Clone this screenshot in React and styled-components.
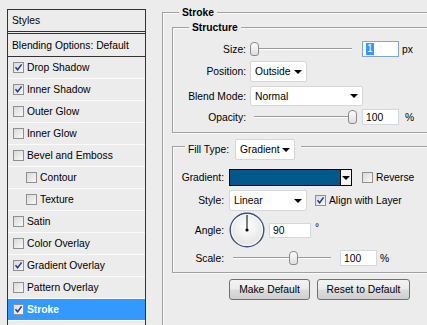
import React from "react";
import styled, { createGlobalStyle } from "styled-components";

const GlobalStyle = createGlobalStyle`
  html, body { margin: 0; padding: 0; background: #ececec; overflow: hidden; }
  body {
    font-family: "Liberation Sans", Arial, sans-serif;
    font-size: 10.3px;
    color: #000;
  }
`;

const Page = styled.div`
  display: flex;
  align-items: flex-start;
  height: 325px;
  overflow: hidden;
`;

/* ---------- left styles list ---------- */

const StylesPanel = styled.div`
  flex: none;
  box-sizing: border-box;
  width: 139px;
  height: 330px;
  margin: 9px 0 0 7px;
  border: 1px solid #333;
  border-bottom: none;
`;

const PanelHeader = styled.div`
  height: 21px;
  display: flex;
  align-items: center;
  padding-left: 4px;
  border-bottom: 3px double #333;
`;

const BlendingRow = styled.div`
  height: 22px;
  display: flex;
  align-items: center;
  padding-left: 4px;
  border-bottom: 1px solid #333;
`;

const StyleRow = styled.div`
  height: 21px;
  display: flex;
  align-items: center;
  gap: 3px;
  padding-left: ${(p) => (p.$indent ? 18 : 5)}px;
  border-bottom: 1px solid #fbfbfb;
  background: ${(p) => (p.$selected ? "#3399ff" : "transparent")};
  color: ${(p) => (p.$selected ? "#fff" : "#000")};
  font-weight: ${(p) => (p.$selected ? "bold" : "normal")};
`;

const Box = styled.span`
  flex: none;
  box-sizing: border-box;
  width: 11px;
  height: 11px;
  border: 1px solid #8e8f8f;
  background: linear-gradient(135deg, #d9d9d9, #f9f9f9);
  display: inline-flex;
  align-items: center;
  justify-content: center;
`;

const Checkbox = ({ checked }) => (
  <Box>
    {checked && (
      <svg width="9" height="9" viewBox="0 0 9 9">
        <path d="M1.5 4.3 L3.6 6.8 L7.6 1.4" fill="none" stroke="#21379a" strokeWidth="1.5" />
      </svg>
    )}
  </Box>
);

/* ---------- right settings ---------- */

const RightArea = styled.div`
  flex: none;
  margin: 12px 0 0 16px;
`;

const GroupBox = styled.div`
  position: relative;
  box-sizing: border-box;
  width: ${(p) => p.$w}px;
  height: ${(p) => p.$h}px;
  margin-top: ${(p) => p.$mt || 0}px;
  padding: ${(p) => p.$pt}px 0 0 ${(p) => p.$pl || 0}px;
  border: 1px solid #a0a0a0;
  box-shadow: inset 1px 1px 0 #fafafa, 1px 1px 0 #fafafa;
`;

const GroupTitle = styled.div`
  position: absolute;
  top: ${(p) => p.$top || -7}px;
  left: ${(p) => p.$left}px;
  padding: 0 3px;
  line-height: 13px;
  background: #ececec;
  font-weight: bold;
`;

const FillLegend = styled.div`
  position: absolute;
  top: -8px;
  left: 12px;
  display: flex;
  align-items: center;
  gap: 6px;
  padding: 0 6px 0 3px;
  background: #ececec;
`;

const FormRow = styled.div`
  display: flex;
  align-items: center;
  height: ${(p) => p.$h}px;
  margin-top: ${(p) => p.$mt || 0}px;
`;

const Label = styled.span`
  flex: none;
  width: ${(p) => p.$w}px;
  margin-right: ${(p) => p.$gap}px;
  text-align: right;
`;

const Slider = styled.div`
  position: relative;
  flex: none;
  width: ${(p) => p.$w}px;
  height: 16px;
  &::before {
    content: "";
    position: absolute;
    left: 4px;
    right: 4px;
    top: 7px;
    height: 1px;
    background: #9a9a9a;
    box-shadow: 0 1px 0 #fff;
  }
`;

const Thumb = styled.div`
  position: absolute;
  top: 1px;
  box-sizing: border-box;
  width: 9px;
  height: 14px;
  border: 1px solid #8a8a8a;
  border-radius: 4px 4px 3px 3px;
  background: linear-gradient(#fdfdfd, #dedede);
`;

const TrackSlider = ({ w, value }) => (
  <Slider $w={w}>
    <Thumb style={{ left: 4 + (w - 8) * value - 4.5 }} />
  </Slider>
);

const TextInput = styled.div`
  flex: none;
  box-sizing: border-box;
  width: ${(p) => p.$w}px;
  height: ${(p) => p.$h || 16}px;
  margin-left: ${(p) => p.$ml || 0}px;
  padding-left: 3px;
  display: flex;
  align-items: center;
  background: #fff;
  border: 1px solid ${(p) => (p.$focus ? "#7ea6cf" : "#d2d8df")};
`;

const Selected = styled.span`
  background: #3399ff;
  color: #fff;
  padding: 0 1px;
  line-height: 12px;
`;

const Unit = styled.span`
  margin-left: ${(p) => p.$ml}px;
  align-self: ${(p) => (p.$sup ? "flex-start" : "center")};
  margin-top: ${(p) => (p.$sup ? 10 : 0)}px;
`;

const Select = styled.div`
  flex: none;
  box-sizing: border-box;
  width: ${(p) => p.$w}px;
  height: ${(p) => p.$h}px;
  display: flex;
  align-items: center;
  justify-content: space-between;
  padding: 0 4px;
  background: #fff;
  border: 1px solid #d6d6d6;
  border-radius: 2px;
`;

const Arrow = styled.span`
  width: 0;
  height: 0;
  border-left: 4px solid transparent;
  border-right: 4px solid transparent;
  border-top: 4px solid #000;
`;

const GradientPicker = styled.div`
  flex: none;
  box-sizing: border-box;
  width: 123px;
  height: 17px;
  display: flex;
  border: 1px solid #000;
`;

const GradientFill = styled.div`
  flex: 1;
  background: #02588c;
  border-right: 1px solid #000;
`;

const GradientDrop = styled.div`
  width: 10px;
  display: flex;
  align-items: center;
  justify-content: center;
  background: #f2f2f2;
`;

const CheckLabel = styled.label`
  display: flex;
  align-items: center;
  gap: 3px;
  margin-left: ${(p) => p.$ml}px;
`;

const ButtonRow = styled.div`
  display: flex;
  gap: 7px;
  margin: 6px 0 0 57px;
`;

const Button = styled.button`
  box-sizing: border-box;
  width: ${(p) => p.$w}px;
  height: 21px;
  padding: 0;
  border: 1px solid #707070;
  border-radius: 3px;
  background: linear-gradient(#f3f3f3 0%, #ebebeb 48%, #dddddd 52%, #cfcfcf 100%);
  font-family: inherit;
  font-size: 10.3px;
  color: #000;
`;

const AngleDial = () => (
  <svg width="36" height="36" viewBox="0 0 36 36" style={{ flex: "none" }}>
    <defs>
      <radialGradient id="dialFill" cx="50%" cy="40%" r="60%">
        <stop offset="0%" stopColor="#ffffff" />
        <stop offset="100%" stopColor="#e2e2e2" />
      </radialGradient>
    </defs>
    <circle cx="18" cy="18" r="16.8" fill="url(#dialFill)" stroke="#3e4f86" strokeWidth="1.4" />
    <circle cx="18" cy="18" r="15.5" fill="none" stroke="#ffffff" strokeWidth="0.8" />
    <line x1="18" y1="18" x2="18" y2="3" stroke="#000" strokeWidth="1" />
    <circle cx="18" cy="18" r="1.6" fill="#000" />
  </svg>
);

const styleItems = [
  { name: "Drop Shadow", checked: true },
  { name: "Inner Shadow", checked: true },
  { name: "Outer Glow" },
  { name: "Inner Glow" },
  { name: "Bevel and Emboss" },
  { name: "Contour", indent: true },
  { name: "Texture", indent: true },
  { name: "Satin" },
  { name: "Color Overlay" },
  { name: "Gradient Overlay", checked: true },
  { name: "Pattern Overlay" },
  { name: "Stroke", checked: true, selected: true },
];

export default function App() {
  return (
    <Page>
      <GlobalStyle />
      <StylesPanel>
        <PanelHeader>Styles</PanelHeader>
        <BlendingRow>Blending Options: Default</BlendingRow>
        {styleItems.map((item) => (
          <StyleRow key={item.name} $indent={item.indent} $selected={item.selected}>
            <Checkbox checked={item.checked} />
            {item.name}
          </StyleRow>
        ))}
      </StylesPanel>

      <RightArea>
        <GroupBox $w={300} $h={340} $pt={14} $pl={9}>
          <GroupTitle $left={16}>Stroke</GroupTitle>

          <GroupBox $w={280} $h={106} $pt={13}>
            <GroupTitle $left={16}>Structure</GroupTitle>
            <FormRow $h={16}>
              <Label $w={73} $gap={4}>Size:</Label>
              <TrackSlider w={106} value={0} />
              <TextInput $w={37} $ml={6} $focus>
                <Selected>1</Selected>
              </TextInput>
              <Unit $ml={3}>px</Unit>
            </FormRow>
            <FormRow $h={21} $mt={4}>
              <Label $w={73} $gap={4}>Position:</Label>
              <Select $w={57} $h={21}>
                Outside
                <Arrow />
              </Select>
            </FormRow>
            <FormRow $h={20} $mt={4}>
              <Label $w={73} $gap={4}>Blend Mode:</Label>
              <Select $w={113} $h={20}>
                Normal
                <Arrow />
              </Select>
            </FormRow>
            <FormRow $h={16} $mt={3}>
              <Label $w={73} $gap={4}>Opacity:</Label>
              <TrackSlider w={106} value={1} />
              <TextInput $w={37} $ml={6}>100</TextInput>
              <Unit $ml={6}>%</Unit>
            </FormRow>
          </GroupBox>

          <GroupBox $w={280} $h={127} $pt={22} $mt={13}>
            <FillLegend>
              Fill Type:
              <Select $w={60} $h={21}>
                Gradient
                <Arrow />
              </Select>
            </FillLegend>
            <FormRow $h={17}>
              <Label $w={51} $gap={5}>Gradient:</Label>
              <GradientPicker>
                <GradientFill />
                <GradientDrop>
                  <Arrow />
                </GradientDrop>
              </GradientPicker>
              <CheckLabel $ml={10}>
                <Checkbox />
                Reverse
              </CheckLabel>
            </FormRow>
            <FormRow $h={21} $mt={4}>
              <Label $w={51} $gap={5}>Style:</Label>
              <Select $w={78} $h={21}>
                Linear
                <Arrow />
              </Select>
              <CheckLabel $ml={8}>
                <Checkbox checked />
                Align with Layer
              </CheckLabel>
            </FormRow>
            <FormRow $h={36} $mt={1}>
              <Label $w={51} $gap={5}>Angle:</Label>
              <AngleDial />
              <TextInput $w={42} $h={15} $ml={4}>90</TextInput>
              <Unit $ml={4} $sup>°</Unit>
            </FormRow>
            <FormRow $h={16} $mt={2}>
              <Label $w={51} $gap={5}>Scale:</Label>
              <TrackSlider w={106} value={0.62} />
              <TextInput $w={37} $ml={5}>100</TextInput>
              <Unit $ml={3}>%</Unit>
            </FormRow>
          </GroupBox>

          <ButtonRow>
            <Button $w={81}>Make Default</Button>
            <Button $w={93}>Reset to Default</Button>
          </ButtonRow>
        </GroupBox>
      </RightArea>
    </Page>
  );
}
